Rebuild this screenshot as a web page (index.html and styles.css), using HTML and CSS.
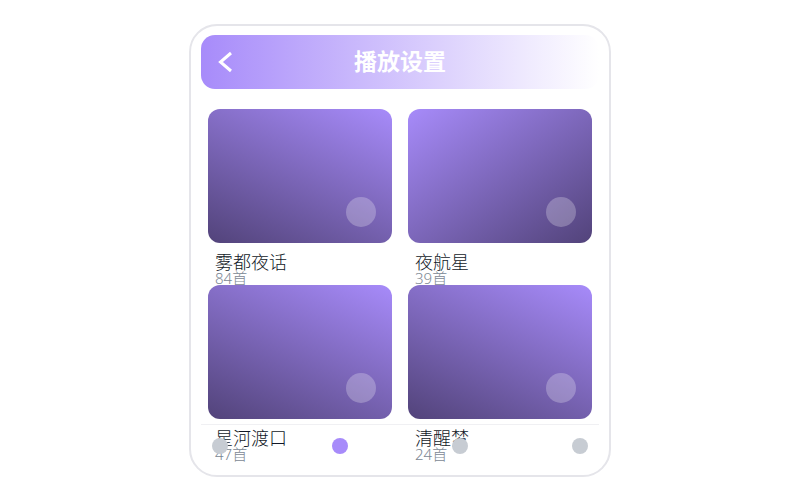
FILE: index.html
```html
<!DOCTYPE html>
<html lang="zh-CN">
<head>
    <meta charset="UTF-8">
    <meta name="viewport" content="width=device-width, initial-scale=1.0">
    <title>播放设置</title>
    <link rel="stylesheet" href="styles.css">
</head>
<body>
    <main class="panel">
        <header class="header">
            <button type="button" class="back" aria-label="返回">
                <svg width="14" height="22" viewBox="0 0 14 22" fill="none" stroke="#ffffff" stroke-width="3">
                    <path d="M13 2 2.500 11 13 20"/>
                </svg>
            </button>
            <h1>播放设置</h1>
        </header>
        <section class="grid">
            <article class="card">
                <div class="cover"><button type="button" class="play" aria-label="播放雾都夜话"></button></div>
                <h2>雾都夜话</h2>
                <p>84首</p>
            </article>
            <article class="card">
                <div class="cover cover-alt"><button type="button" class="play" aria-label="播放夜航星"></button></div>
                <h2>夜航星</h2>
                <p>39首</p>
            </article>
            <article class="card">
                <div class="cover"><button type="button" class="play" aria-label="播放星河渡口"></button></div>
                <h2>星河渡口</h2>
                <p>47首</p>
            </article>
            <article class="card">
                <div class="cover"><button type="button" class="play" aria-label="播放清醒梦"></button></div>
                <h2>清醒梦</h2>
                <p>24首</p>
            </article>
        </section>
        <nav class="tabs">
            <button type="button" class="tab" aria-label="首页"></button>
            <button type="button" class="tab active" aria-label="歌单"></button>
            <button type="button" class="tab" aria-label="发现"></button>
            <button type="button" class="tab" aria-label="我的"></button>
        </nav>
    </main>
</body>
</html>
```
FILE: styles.css
```css
* {
    box-sizing: border-box;
}
body {
    font-family: "Noto Sans", "Noto Sans CJK SC", sans-serif;
    background-color: #ffffff;
    margin: 0;
    min-height: 100vh;
    display: flex;
    justify-content: center;
    align-items: center;
}
button {
    border: none;
    padding: 0;
    cursor: pointer;
}
.panel {
    position: relative;
    width: 100%;
    max-width: 422px;
    padding: 9px 10px 14px;
    border: 2px solid #e5e5ea;
    border-radius: 28px;
    background-color: #ffffff;
}
.header {
    display: grid;
    grid-template-columns: 48px 1fr 48px;
    align-items: center;
    height: 54px;
    border-radius: 14px;
    background: linear-gradient(90deg, #a78bfa, #ffffff);
}
.back {
    display: flex;
    justify-content: center;
    align-items: center;
    height: 48px;
    background: none;
}
h1 {
    margin: 0 0 2px;
    font-size: 23px;
    line-height: 32px;
    text-align: center;
    color: #ffffff;
}
.grid {
    display: grid;
    grid-template-columns: 1fr 1fr;
    gap: 0 16px;
    padding: 20px 7px 0;
}
.card {
    height: 176px;
}
.cover {
    display: flex;
    justify-content: flex-end;
    align-items: flex-end;
    height: 134px;
    padding: 16px;
    border-radius: 12px;
    background: linear-gradient(205deg, #a78bfa, #52437a);
}
.cover-alt {
    background: linear-gradient(145deg, #a78bfa, #52437a);
}
.play {
    width: 30px;
    height: 30px;
    border-radius: 50%;
    background-color: rgba(255, 255, 255, 0.25);
}
.card h2 {
    margin: 9px 7px 0;
    font-size: 18px;
    font-weight: 300;
    line-height: 20px;
    color: #111827;
}
.card p {
    margin: 0 7px;
    font-size: 15px;
    font-weight: 300;
    line-height: 13px;
    color: #7c8894;
}
/* the tab bar floats over the last row of the list */
.tabs {
    position: absolute;
    left: 10px;
    right: 10px;
    bottom: 7px;
    display: flex;
    justify-content: space-between;
    align-items: center;
    height: 44px;
    padding: 0 11px;
    border-top: 1px solid #f0f0f3;
}
.tab {
    width: 16px;
    height: 16px;
    border-radius: 50%;
    background-color: #c7ccd3;
}
.tab.active {
    background-color: #a78bfa;
}
```
